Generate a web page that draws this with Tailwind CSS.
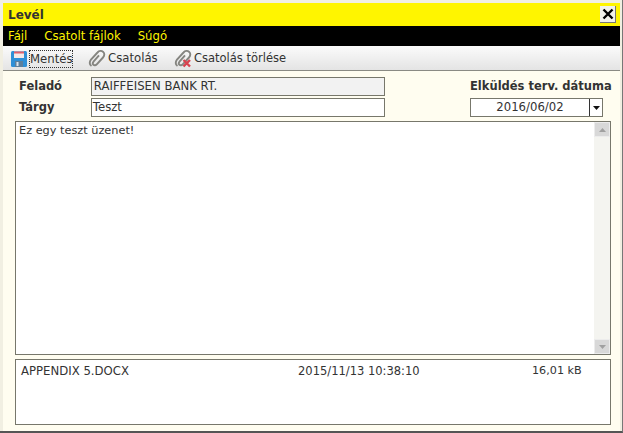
<!DOCTYPE html>
<html lang="en">
<head>
  <meta charset="UTF-8" />
  <title>Levél</title>
  <script src="https://cdn.jsdelivr.net/npm/@tailwindcss/browser@4"></script>
</head>
<body class="w-[623px] h-[433px] overflow-hidden bg-[#f1efe2] font-['DejaVu_Sans',Verdana,sans-serif] text-[11.7px] text-[#333]">
  <div class="w-[623px] h-[433px] border-b-2 border-b-[#555] border-r border-r-[#777] pt-[3px] pl-[3px] pr-[2px] flex flex-col">
    <!-- Title -->
    <div class="h-[23px] shrink-0 bg-[#fff500] flex items-center justify-between pl-[5px] pr-[4px]">
      <span class="font-bold text-[12px] text-[#333]">Levél</span>
      <div class="w-[16px] h-[17px] bg-[#f2f2ea] border-r border-b border-[#777] flex items-center justify-center">
        <svg width="12" height="12" viewBox="0 0 12 12"><path d="M1.5 1.5L10.5 10.5M10.5 1.5L1.5 10.5" stroke="#000" stroke-width="2.4" fill="none"/></svg>
      </div>
    </div>
    <!-- Menu -->
    <div class="h-[20px] shrink-0 bg-black flex items-center pl-[5px] pt-[1px] text-[#fff500]">
      <span class="mr-[17px]">Fájl</span><span class="mr-[17px]">Csatolt fájlok</span><span>Súgó</span>
    </div>
    <!-- Toolbar -->
    <div class="h-[25px] shrink-0 bg-gradient-to-b from-[#fbfbfb] to-[#e4e4e4] border-b border-[#8a8a84] flex items-center pl-[8px] pt-[2px]">
      <svg width="16" height="16" viewBox="0 0 16 16" class="mr-[2px]">
        <rect x="0" y="0" width="16" height="16" rx="1.5" fill="#2f8fd6"/>
        <rect x="3" y="0.5" width="10" height="6.5" fill="#f4e9e9"/>
        <rect x="3" y="0.5" width="10" height="2" fill="#e0606a"/>
        <rect x="4" y="10" width="8" height="6" fill="#5d7f9c"/>
        <rect x="5.5" y="11" width="2" height="4" fill="#dce6ee"/>
      </svg>
      <span class="border border-dotted border-[#333] w-[44px] text-center h-[18px] leading-[16px] mr-[15px]">Mentés</span>
      <svg width="18" height="18" viewBox="0 0 18 18" class="mr-[2px]">
        <path d="M3.5 16C1 14.5 1.5 11.5 3 9.5L9.5 2.5C11 .8 13.5 .5 15.2 1.9C16.8 3.3 16.5 5.8 15 7.5L9 14.2C8 15.4 6.3 15.6 5.4 14.8C4.5 14 4.7 12.6 5.7 11.4L11 5.4" stroke="#858580" stroke-width="1.9" fill="none"/>
      </svg>
      <span class="w-[49px] whitespace-nowrap mr-[17px]">Csatolás</span>
      <svg width="18" height="18" viewBox="0 0 18 18" class="mr-[2px]">
        <path d="M3.5 16C1 14.5 1.5 11.5 3 9.5L9.5 2.5C11 .8 13.5 .5 15.2 1.9C16.8 3.3 16.5 5.8 15 7.5L9 14.2C8 15.4 6.3 15.6 5.4 14.8C4.5 14 4.7 12.6 5.7 11.4L11 5.4" stroke="#858580" stroke-width="1.9" fill="none"/>
        <path d="M9.5 10L16 16.5M16 10L9.5 16.5" stroke="#d8424f" stroke-width="2.4" fill="none"/>
      </svg>
      <span class="text-[11.5px]">Csatolás törlése</span>
    </div>
    <!-- Body -->
    <div class="flex-1 min-h-0 bg-[#fffdf0] flex flex-col pl-[12px] pr-[9px]">
      <div class="flex h-[50px] shrink-0 pt-[6px]">
        <div class="w-[76px] flex flex-col gap-[2px] pl-[4px] font-bold text-[11.5px]">
          <span class="h-[19px] leading-[19px]">Feladó</span>
          <span class="h-[19px] leading-[19px]">Tárgy</span>
        </div>
        <div class="w-[295px] flex flex-col gap-[2px]">
          <div class="h-[19px] border border-[#77776b] bg-[#f2f2f2] pl-[2px] leading-[17px]">RAIFFEISEN BANK RT.</div>
          <div class="h-[19px] border border-[#77776b] bg-white pl-[1px] leading-[17px]">Teszt</div>
        </div>
        <div class="ml-[85px] w-[141px] shrink-0 flex flex-col gap-[2px]">
          <span class="h-[19px] leading-[19px] font-bold text-[11.5px] whitespace-nowrap">Elküldés terv. dátuma</span>
          <div class="w-[133px] h-[19px] border border-[#77776b] bg-white flex">
            <span class="flex-1 text-center leading-[17px]">2016/06/02</span>
            <div class="w-[13px] border-l border-[#333] flex items-center justify-center">
              <svg width="7" height="4" viewBox="0 0 7 4"><path d="M0 0H7L3.5 4Z" fill="#111"/></svg>
            </div>
          </div>
        </div>
      </div>
      <!-- Message -->
      <div class="h-[234px] shrink-0 border border-[#77776b] bg-white flex">
        <div class="flex-1 pl-[3px] pt-[1px] text-[11.3px]">Ez egy teszt üzenet!</div>
        <div class="w-[16px] bg-[#f4f4f0] flex flex-col justify-between">
          <div class="h-[15px] bg-[#d8d8d8] border border-[#ececec] flex items-center justify-center">
            <svg width="7" height="4" viewBox="0 0 7 4"><path d="M0 4H7L3.5 0Z" fill="#a0a0a0"/></svg>
          </div>
          <div class="h-[15px] bg-[#d8d8d8] border border-[#ececec] flex items-center justify-center">
            <svg width="7" height="4" viewBox="0 0 7 4"><path d="M0 0H7L3.5 4Z" fill="#a0a0a0"/></svg>
          </div>
        </div>
      </div>
      <!-- Attachments -->
      <div class="h-[66px] shrink-0 border border-[#77776b] bg-white mt-[4px] flex items-start pt-[3px] pl-[5px]">
        <span class="w-[277px]">APPENDIX 5.DOCX</span>
        <span class="w-[234px] text-[11.5px]">2015/11/13 10:38:10</span>
        <span class="text-[11.2px]">16,01 kB</span>
      </div>
    </div>
  </div>
</body>
</html>
